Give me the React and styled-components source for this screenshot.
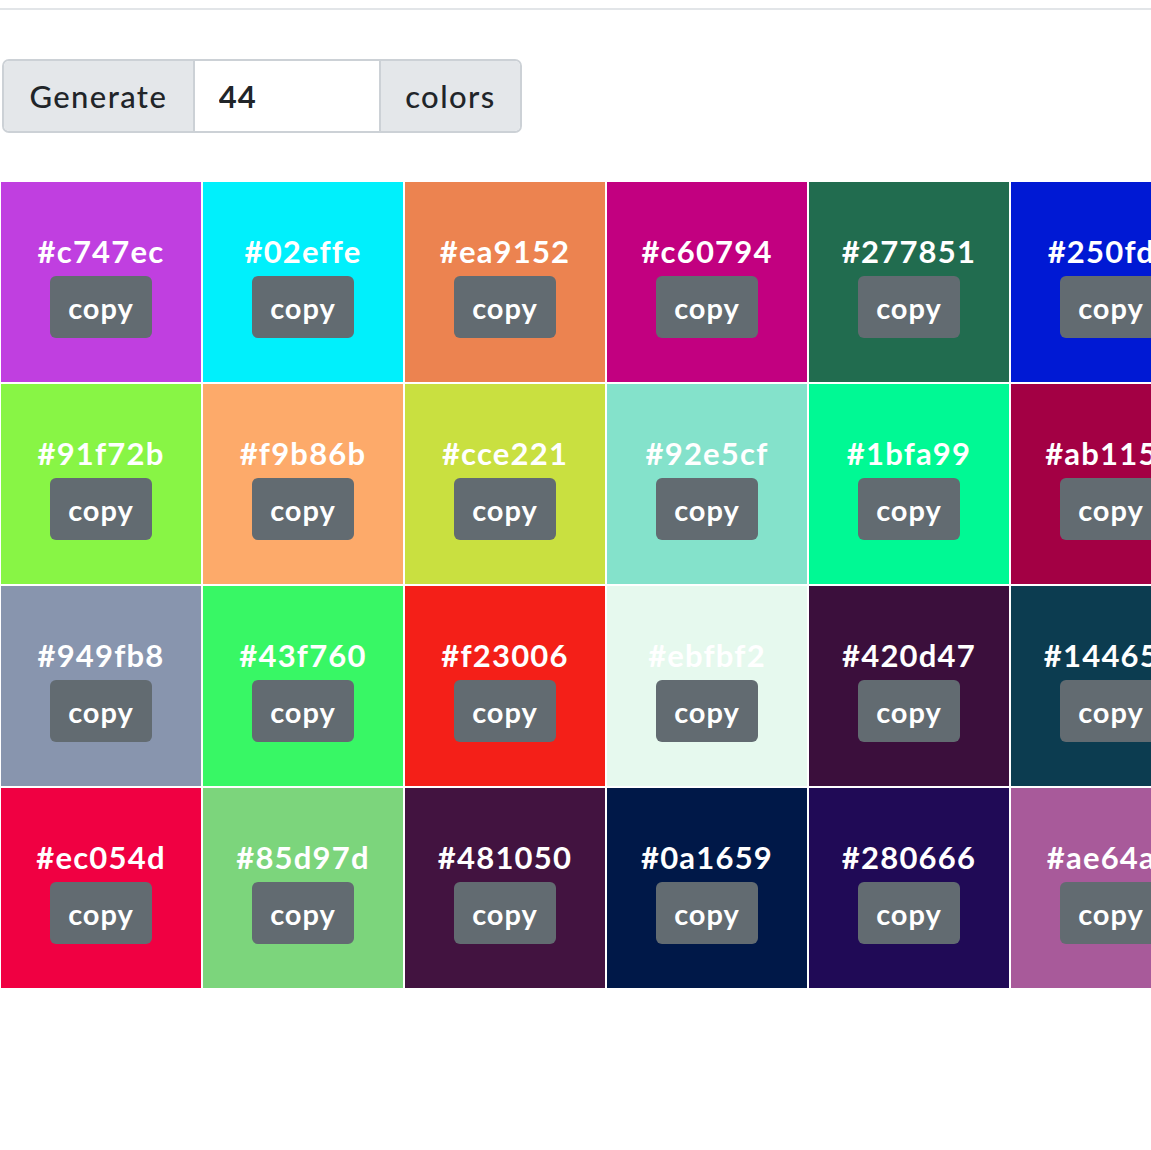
import React, { useState } from "react";
import styled, { createGlobalStyle } from "styled-components";

const GlobalStyle = createGlobalStyle`
  body {
    margin: 0;
    background: #fff;
    font-family: "Lato", "Noto Sans", sans-serif;
    color: #212529;
    overflow: hidden;
  }
`;

const Rule = styled.hr`
  margin: 8px 0 0;
  border: 0;
  border-top: 2px solid #e2e5e8;
`;

const Group = styled.div`
  display: flex;
  width: 520px;
  height: 74px;
  margin: 49px 0 0 2px;
  border: 2px solid #ccd1d6;
  border-radius: 7px;
  overflow: hidden;
  box-sizing: border-box;
`;

const Addon = styled.div`
  display: flex;
  align-items: center;
  justify-content: center;
  width: ${p => p.width}px;
  background: #e4e7ea;
  font-size: 31px;
  font-weight: 500;
  letter-spacing: 1.4px;
  border-left: ${p => (p.divider ? "2px solid #ccd1d6" : "0")};
`;

const NumberInput = styled.input`
  width: 186px;
  border: 0;
  border-left: 2px solid #ccd1d6;
  padding: 0 0 0 24px;
  font-family: inherit;
  font-size: 31px;
  font-weight: 700;
  letter-spacing: 1px;
  color: #212529;
  outline: none;
  box-sizing: border-box;
`;

const Grid = styled.div`
  display: grid;
  grid-template-columns: repeat(11, 202px);
  margin-top: 48px;
  width: 2222px;
`;

const Tile = styled.div`
  margin: 1px;
  height: 200px;
  background: ${p => p.bg};
  display: flex;
  flex-direction: column;
  align-items: center;
  justify-content: center;
  padding-top: 4px;
  box-sizing: border-box;
`;

const Hex = styled.div`
  color: #fff;
  font-size: 31px;
  font-weight: 700;
  letter-spacing: 1.2px;
  line-height: 42px;
  margin-bottom: 4px;
  white-space: nowrap;
`;

const CopyButton = styled.button`
  width: 102px;
  height: 62px;
  border: 0;
  border-radius: 6px;
  background: #626b71;
  color: #fff;
  font-family: inherit;
  font-size: 29px;
  font-weight: 700;
  letter-spacing: 1px;
  cursor: pointer;
`;

const colors = [
  ["#c747ec", "#c03fe0"], ["#02effe", "#00f0fc"], ["#ea9152", "#ec8350"],
  ["#c60794", "#c20080"], ["#277851", "#216c4f"], ["#250fd4", "#0019d4"],
  ["#91f72b", "#88f545"], ["#f9b86b", "#fdaa6a"], ["#cce221", "#c9e040"],
  ["#92e5cf", "#84e2cb"], ["#1bfa99", "#00f994"], ["#ab1154", "#a30044"],
  ["#949fb8", "#8895ae"], ["#43f760", "#38f765"], ["#f23006", "#f41f18"],
  ["#ebfbf2", "#e6f9ee"], ["#420d47", "#3b0f3c"], ["#144656", "#0c3c50"],
  ["#ec054d", "#f00042"], ["#85d97d", "#7cd57c"], ["#481050", "#421340"],
  ["#0a1659", "#001848"], ["#280666", "#200a56"], ["#ae64a6", "#a85a9a"],
];

const rows = [0, 1, 2, 3].map(r => colors.slice(r * 6, r * 6 + 6));

export default function App() {
  const [count, setCount] = useState("44");
  return (
    <>
      <GlobalStyle />
      <Rule />
      <Group>
        <Addon width={191}>Generate</Addon>
        <NumberInput value={count} onChange={e => setCount(e.target.value)} />
        <Addon width={141} divider>colors</Addon>
      </Group>
      <Grid>
        {rows.map(row =>
          [...row, ...Array(5).fill(null)].map((c, i) =>
            c ? (
              <Tile key={c[0]} bg={c[1]}>
                <Hex>{c[0]}</Hex>
                <CopyButton>copy</CopyButton>
              </Tile>
            ) : (
              <Tile key={i} bg="#888" />
            )
          )
        )}
      </Grid>
    </>
  );
}
